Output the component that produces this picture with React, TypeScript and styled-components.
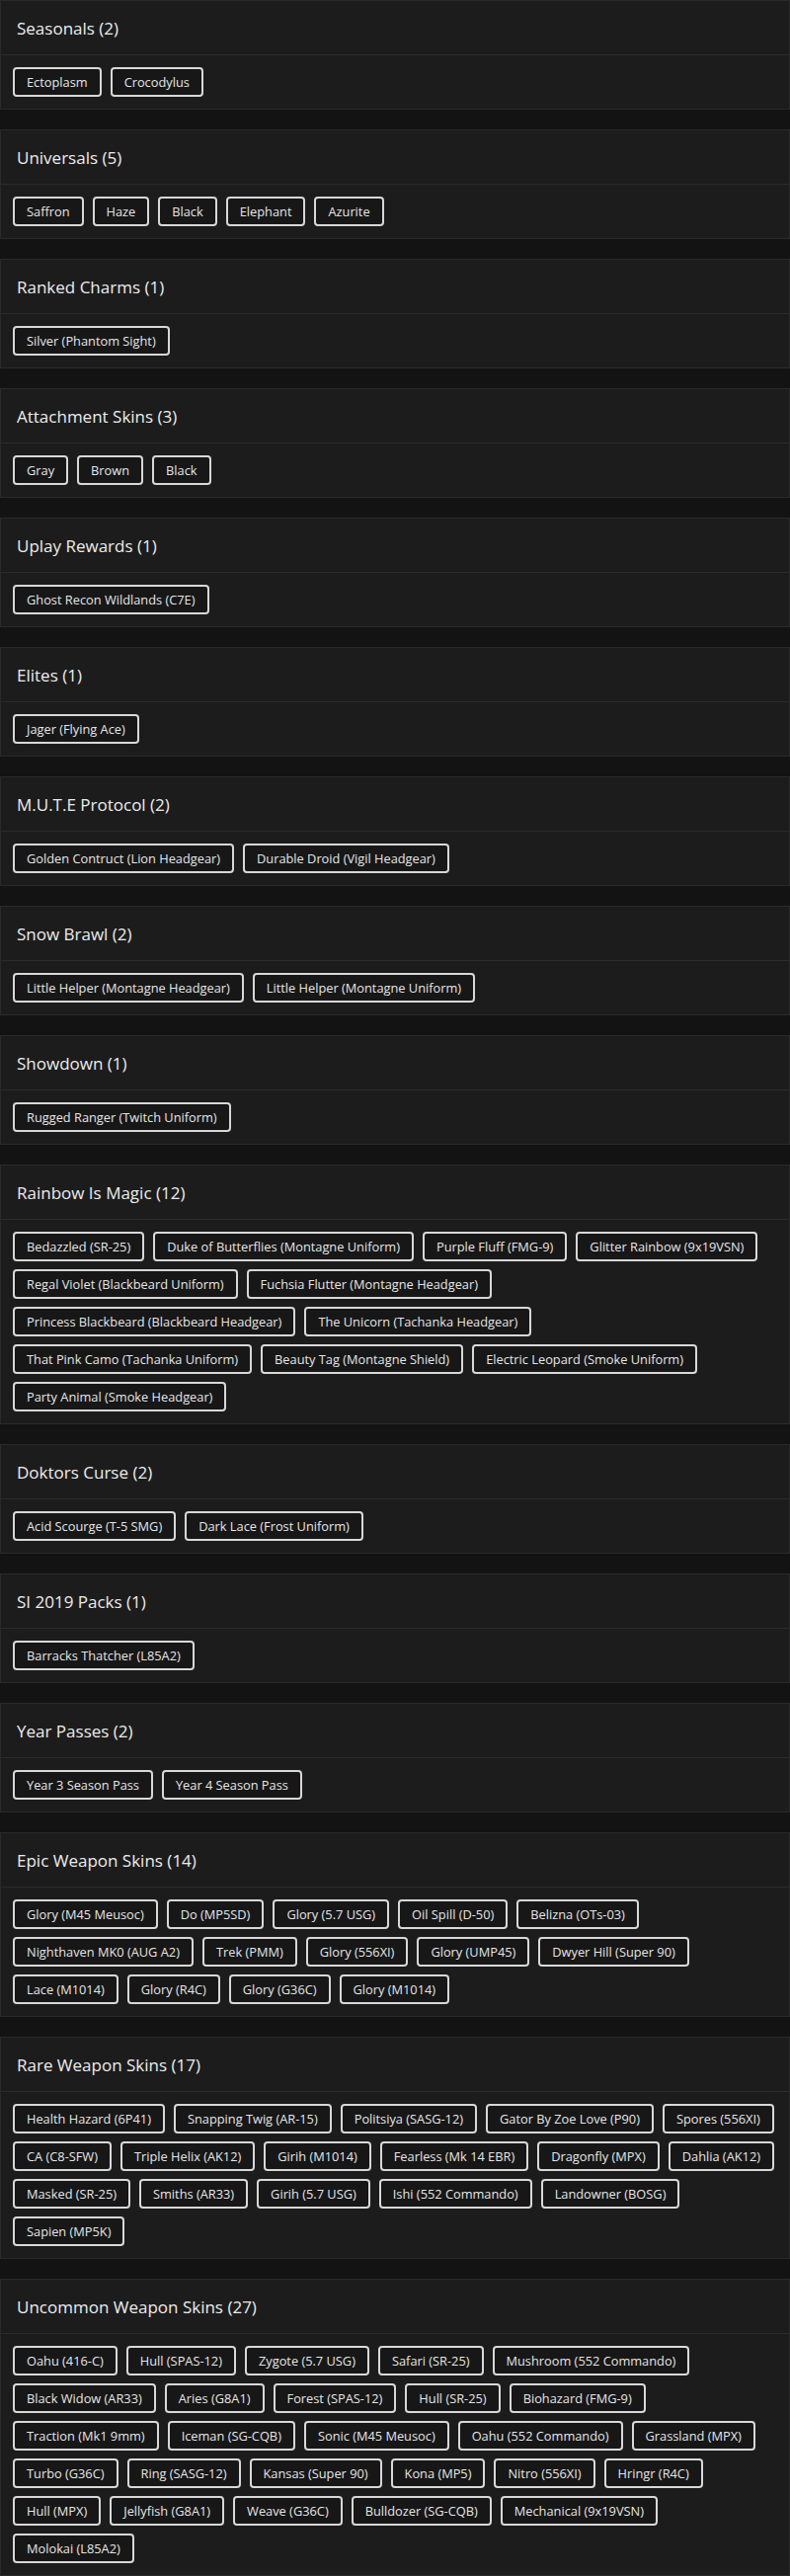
import styled, { createGlobalStyle } from 'styled-components';

const sections: { title: string; items: string[] }[] = [
  { title: 'Seasonals', items: ['Ectoplasm', 'Crocodylus'] },
  { title: 'Universals', items: ['Saffron', 'Haze', 'Black', 'Elephant', 'Azurite'] },
  { title: 'Ranked Charms', items: ['Silver (Phantom Sight)'] },
  { title: 'Attachment Skins', items: ['Gray', 'Brown', 'Black'] },
  { title: 'Uplay Rewards', items: ['Ghost Recon Wildlands (C7E)'] },
  { title: 'Elites', items: ['Jager (Flying Ace)'] },
  {
    title: 'M.U.T.E Protocol',
    items: ['Golden Contruct (Lion Headgear)', 'Durable Droid (Vigil Headgear)'],
  },
  {
    title: 'Snow Brawl',
    items: ['Little Helper (Montagne Headgear)', 'Little Helper (Montagne Uniform)'],
  },
  { title: 'Showdown', items: ['Rugged Ranger (Twitch Uniform)'] },
  {
    title: 'Rainbow Is Magic',
    items: [
      'Bedazzled (SR-25)',
      'Duke of Butterflies (Montagne Uniform)',
      'Purple Fluff (FMG-9)',
      'Glitter Rainbow (9x19VSN)',
      'Regal Violet (Blackbeard Uniform)',
      'Fuchsia Flutter (Montagne Headgear)',
      'Princess Blackbeard (Blackbeard Headgear)',
      'The Unicorn (Tachanka Headgear)',
      'That Pink Camo (Tachanka Uniform)',
      'Beauty Tag (Montagne Shield)',
      'Electric Leopard (Smoke Uniform)',
      'Party Animal (Smoke Headgear)',
    ],
  },
  { title: 'Doktors Curse', items: ['Acid Scourge (T-5 SMG)', 'Dark Lace (Frost Uniform)'] },
  { title: 'SI 2019 Packs', items: ['Barracks Thatcher (L85A2)'] },
  { title: 'Year Passes', items: ['Year 3 Season Pass', 'Year 4 Season Pass'] },
  {
    title: 'Epic Weapon Skins',
    items: [
      'Glory (M45 Meusoc)',
      'Do (MP5SD)',
      'Glory (5.7 USG)',
      'Oil Spill (D-50)',
      'Belizna (OTs-03)',
      'Nighthaven MK0 (AUG A2)',
      'Trek (PMM)',
      'Glory (556XI)',
      'Glory (UMP45)',
      'Dwyer Hill (Super 90)',
      'Lace (M1014)',
      'Glory (R4C)',
      'Glory (G36C)',
      'Glory (M1014)',
    ],
  },
  {
    title: 'Rare Weapon Skins',
    items: [
      'Health Hazard (6P41)',
      'Snapping Twig (AR-15)',
      'Politsiya (SASG-12)',
      'Gator By Zoe Love (P90)',
      'Spores (556XI)',
      'CA (C8-SFW)',
      'Triple Helix (AK12)',
      'Girih (M1014)',
      'Fearless (Mk 14 EBR)',
      'Dragonfly (MPX)',
      'Dahlia (AK12)',
      'Masked (SR-25)',
      'Smiths (AR33)',
      'Girih (5.7 USG)',
      'Ishi (552 Commando)',
      'Landowner (BOSG)',
      'Sapien (MP5K)',
    ],
  },
  {
    title: 'Uncommon Weapon Skins',
    items: [
      'Oahu (416-C)',
      'Hull (SPAS-12)',
      'Zygote (5.7 USG)',
      'Safari (SR-25)',
      'Mushroom (552 Commando)',
      'Black Widow (AR33)',
      'Aries (G8A1)',
      'Forest (SPAS-12)',
      'Hull (SR-25)',
      'Biohazard (FMG-9)',
      'Traction (Mk1 9mm)',
      'Iceman (SG-CQB)',
      'Sonic (M45 Meusoc)',
      'Oahu (552 Commando)',
      'Grassland (MPX)',
      'Turbo (G36C)',
      'Ring (SASG-12)',
      'Kansas (Super 90)',
      'Kona (MP5)',
      'Nitro (556XI)',
      'Hringr (R4C)',
      'Hull (MPX)',
      'Jellyfish (G8A1)',
      'Weave (G36C)',
      'Bulldozer (SG-CQB)',
      'Mechanical (9x19VSN)',
      'Molokai (L85A2)',
    ],
  },
];

const App = () => {
  return (
    <Page>
      <GlobalStyle />
      {sections.map((s) => (
        <Card key={s.title}>
          <CardHeader>
            <Title>
              {s.title} ({s.items.length})
            </Title>
          </CardHeader>
          <CardBody>
            {s.items.map((item, i) => (
              <Tag key={item + i}>{item}</Tag>
            ))}
          </CardBody>
        </Card>
      ))}
    </Page>
  );
};

const GlobalStyle = createGlobalStyle`
  html, body {
    margin: 0;
    padding: 0;
    background: #131313;
  }
  body {
    font-family: 'Open Sans', 'Noto Sans', sans-serif;
    color: #e6e6e6;
  }
`;

const Page = styled.div`
  display: flex;
  flex-direction: column;
  gap: 20px;
  width: 800px;
`;

const Card = styled.section`
  background: #1c1c1c;
  border: 1px solid #2a2a2a;
`;

const CardHeader = styled.div`
  display: flex;
  align-items: center;
  height: 54px;
  padding: 0 16px;
  border-bottom: 1px solid #2c2c2c;
`;

const Title = styled.h2`
  margin: 0;
  font-size: 17px;
  font-weight: 500;
  color: #ececec;
`;

const CardBody = styled.div`
  display: flex;
  flex-wrap: wrap;
  gap: 8px 9px;
  padding: 12px 13px 12px 12px;
`;

const Tag = styled.span`
  display: inline-block;
  padding: 6px 12px;
  font-size: 12.8px;
  line-height: 14px;
  color: #e6e6e6;
  border: 2px solid #d8d8d8;
  border-radius: 4px;
  background: #171717;
  white-space: nowrap;
`;

export default App;
